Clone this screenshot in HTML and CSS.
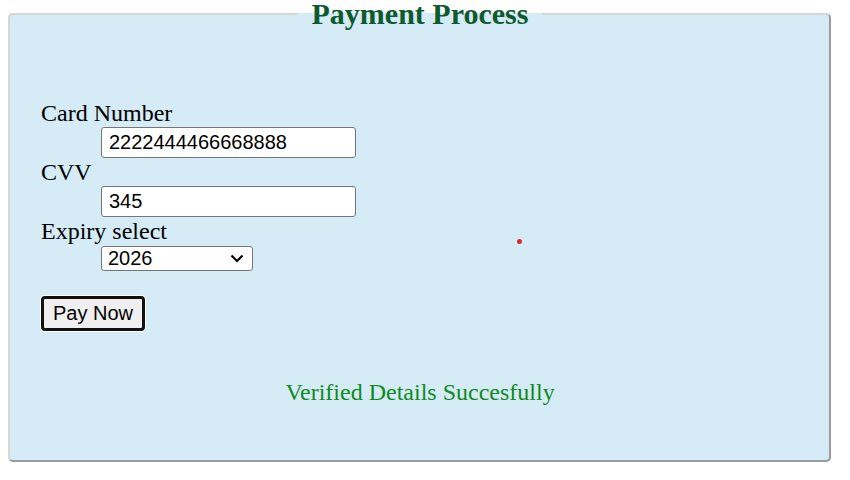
FILE: index.html
```html
<!DOCTYPE html>
<html>
<head>
<meta charset="utf-8">
<link rel="stylesheet" href="styles.css">
</head>
<body>
<form class="payment">
  <fieldset class="panel">
    <legend class="panel-title">Payment Process</legend>
    <label class="field-label" for="card">Card Number</label>
    <input class="field-input" id="card" type="text" value="2222444466668888">
    <label class="field-label" for="cvv">CVV</label>
    <input class="field-input" id="cvv" type="text" value="345">
    <label class="field-label" for="expiry">Expiry select</label>
    <select class="field-select" id="expiry">
      <option>2026</option>
    </select>
    <button class="pay-btn" type="button">Pay Now</button>
    <p class="status">Verified Details Succesfully</p>
  </fieldset>
  <span class="dot"></span>
</form>
</body>
</html>
```
FILE: styles.css
```css
html, body {
  background: #ffffff;
}
body {
  margin: 0 8px;
  font-family: "Liberation Serif", "Times New Roman", serif;
}
.payment {
  margin: 0;
}
.panel {
  margin: 0 11px 0 0;
  padding: 71px 30px 54px 31px;
  background: #d5ebf5;
  border: 2px solid;
  border-color: #d6d6d6 #9a9a9a #9a9a9a #d6d6d6;
  border-radius: 5px;
  min-width: 0;
}
.panel-title {
  margin: 0 auto;
  padding: 0 14px;
  font-size: 30px;
  line-height: 28px;
  font-weight: bold;
  color: #0c5a2e;
}
.field-label {
  display: block;
  font-size: 24px;
  line-height: 28px;
  color: #000;
}
.field-input {
  display: block;
  box-sizing: border-box;
  width: 255px;
  height: 31px;
  margin: 0 0 0 60px;
  padding: 3px 7px;
  font-family: "Liberation Sans", Arial, sans-serif;
  font-size: 20px;
  color: #000;
  background: #fff;
  border: 1px solid #767676;
  border-radius: 3px;
}
.field-select {
  display: block;
  box-sizing: border-box;
  width: 152px;
  height: 25px;
  margin: 1px 0 0 60px;
  padding: 0 24px 0 6px;
  font-family: "Liberation Sans", Arial, sans-serif;
  font-size: 20px;
  line-height: 23px;
  color: #000;
  -webkit-appearance: none;
  appearance: none;
  background: #fff url("data:image/svg+xml,%3Csvg xmlns='http://www.w3.org/2000/svg' width='14' height='9' viewBox='0 0 14 9'%3E%3Cpath d='M1.5 1.5l5.5 5.5 5.5-5.5' fill='none' stroke='%23000' stroke-width='2.2'/%3E%3C/svg%3E") no-repeat right 8px center;
  border: 1px solid #767676;
  border-radius: 3px;
}
.pay-btn {
  display: block;
  margin: 25px 0 0 0;
  padding: 3px 9px;
  font-family: "Liberation Sans", Arial, sans-serif;
  font-size: 20px;
  color: #000;
  background: #efefef;
  border: 3px solid #111;
  border-radius: 4px;
  box-shadow: 0 0 0 1px #fff;
}
.status {
  margin: 47px 0 0 0;
  text-align: center;
  font-size: 24px;
  line-height: 28px;
  color: #0f8a1c;
}
.dot {
  position: absolute;
  left: 517px;
  top: 239px;
  width: 5px;
  height: 5px;
  border-radius: 50%;
  background: #e0282e;
}
```
